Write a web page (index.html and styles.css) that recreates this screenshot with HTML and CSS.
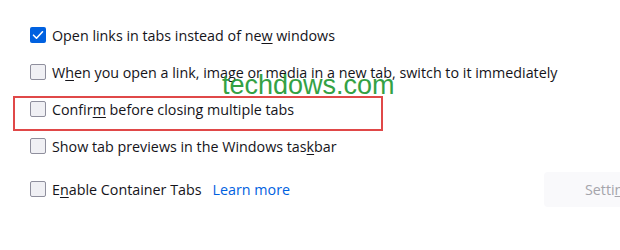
FILE: index.html
```html
<!DOCTYPE html>
<html>
<head>
  <title>Tabs</title>
  <link rel="stylesheet" href="styles.css">
</head>
<body>
  <div class="prefs">
    <div class="row">
      <span class="box checked">
        <svg width="16" height="16" viewBox="0 0 16 16"><path d="M3.5 8.2l3 3 6-6.4" fill="none" stroke="#fff" stroke-width="1.6" stroke-linecap="round" stroke-linejoin="round"/></svg>
      </span>
      <span class="label">Open links in tabs instead of ne<u>w</u> windows</span>
    </div>
    <div class="row">
      <span class="box"></span>
      <span class="label">W<u>h</u>en you open a link, image or media in a new tab, switch to it immediately</span>
    </div>
    <div class="row">
      <span class="box"></span>
      <span class="label">Confir<u>m</u> before closing multiple tabs</span>
    </div>
    <div class="row">
      <span class="box"></span>
      <span class="label">Show tab previews in the Windows tas<u>k</u>bar</span>
    </div>
    <div class="row last">
      <span class="box"></span>
      <span class="label">E<u>n</u>able Container Tabs</span>
      <a class="learn" href="#">Learn more</a>
      <button class="settings">Setti<u>n</u>gs…</button>
    </div>
  </div>
  <div class="highlight"></div>
  <div class="watermark">techdows.com</div>
</body>
</html>
```

FILE: styles.css
```css
body {
  margin: 0;
  background: #fff;
  font-family: "Open Sans", "Noto Sans", sans-serif;
  font-size: 14.3px;
  color: #15141a;
  overflow: hidden;
  width: 620px;
  height: 250px;
  position: relative;
}
.prefs {
  padding: 23px 0 0 30px;
  width: 760px;
}
.row {
  display: flex;
  align-items: center;
  height: 24px;
  margin-bottom: 13px;
}
.row.last {
  margin-top: 3px;
  height: 36px;
}
.box {
  width: 14px;
  height: 14px;
  border: 1px solid #8f8f9d;
  border-radius: 2px;
  background: #f0f0f4;
  margin-right: 6px;
  flex: none;
  display: flex;
}
.box.checked {
  width: 16px;
  height: 16px;
  border: none;
  background: #0061e0;
}
.label u {
  text-decoration-thickness: 1px;
  text-underline-offset: 2px;
}
.learn {
  color: #0061e0;
  text-decoration: none;
  margin-left: 11px;
}
.settings {
  margin-left: auto;
  margin-right: 100px;
  width: 146px;
  height: 35px;
  border: none;
  border-radius: 4px;
  background: #f9f9fb;
  color: #a5a5ab;
  font-family: inherit;
  font-size: 14.3px;
}
.highlight {
  position: absolute;
  left: 13px;
  top: 96px;
  width: 366px;
  height: 31px;
  border: 2.5px solid #e04848;
}
.watermark {
  position: absolute;
  left: 222px;
  top: 70px;
  font-family: "Liberation Sans", Arial, sans-serif;
  font-size: 27px;
  color: #2a9d3a;
  opacity: 0.95;
}
```
